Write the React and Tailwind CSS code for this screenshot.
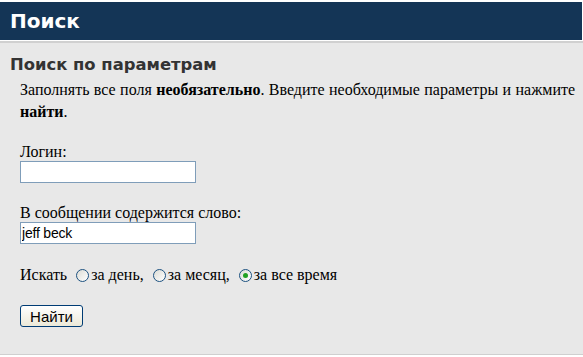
export default function App() {
  const serif = { fontFamily: '"Liberation Serif", serif' };
  const radio = "shrink-0 w-[13px] h-[13px] rounded-full border border-[#1c5180] bg-gradient-to-br from-[#dcdcd5] to-white flex items-center justify-center";
  return (
    <div className="w-[583px] h-[357px] bg-white pt-[2px] overflow-hidden">
      <div className="h-[38px] bg-[#143556] flex items-center pl-[10px] mr-[1px]">
        <span className="text-white font-bold text-[20px] leading-none" style={{ fontFamily: '"DejaVu Sans", sans-serif' }}>Поиск</span>
      </div>
      <div className="h-[2px] bg-[#d0d0d0] mt-[1px]" />
      <div className="bg-[#e8e8e8] h-[312px] border-b border-[#cfcfcf] pl-[10px] pt-[12px]">
        <h2 className="text-[16.4px] font-bold text-[#333] leading-[20px]" style={{ fontFamily: '"DejaVu Sans", sans-serif' }}>Поиск по параметрам</h2>
        <div className="pl-[10px] text-[16px] text-black" style={serif}>
          <p className="leading-[22px] mt-[4px] whitespace-nowrap [word-spacing:0.4px]">
            Заполнять все поля <b>необязательно</b>. Введите необходимые параметры и нажмите
            <br />
            <b>найти</b>.
          </p>
          <div className="mt-[20px] leading-[18px]">Логин:</div>
          <input className="block w-[176px] h-[22px] border border-[#7f9db9] bg-white px-[2px] text-[14px] outline-none" style={{ fontFamily: '"Liberation Sans", sans-serif' }} />
          <div className="mt-[21px] leading-[18px]">В сообщении содержится слово:</div>
          <input defaultValue="jeff beck" className="block w-[176px] h-[22px] border border-[#7f9db9] bg-white px-[1px] text-[14px] outline-none tracking-[-0.2px]" style={{ fontFamily: '"Liberation Sans", sans-serif' }} />
          <div className="mt-[22px] flex items-center h-[18px]">
            <span>Искать</span>
            <span className={"ml-[9px] " + radio} />
            <span className="ml-[2px]">за день,</span>
            <span className={"ml-[9px] " + radio} />
            <span className="ml-[2px]">за месяц,</span>
            <span className={"ml-[9px] " + radio}>
              <span className="w-[5px] h-[5px] rounded-full bg-[#21a121]" />
            </span>
            <span className="ml-[2px]">за все время</span>
          </div>
          <button className="mt-[21px] w-[63px] h-[22px] rounded-[3px] border border-[#003c74] bg-gradient-to-b from-white to-[#ece9d8] text-[15px] text-black leading-none" style={{ fontFamily: '"Liberation Sans", sans-serif' }}>Найти</button>
        </div>
      </div>
    </div>
  );
}
